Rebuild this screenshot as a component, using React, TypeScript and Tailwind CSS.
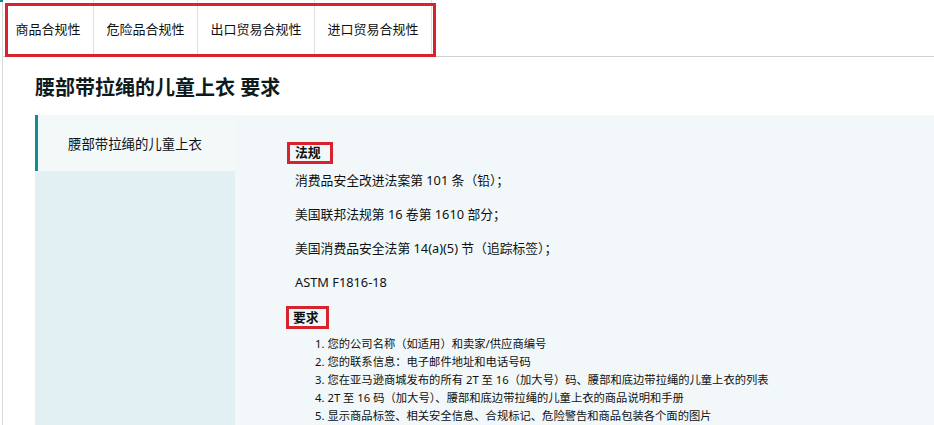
import React from "react";

const tabs = ["商品合规性", "危险品合规性", "出口贸易合规性", "进口贸易合规性"];

const regs = [
  "消费品安全改进法案第 101 条（铅）；",
  "美国联邦法规第 16 卷第 1610 部分；",
  "美国消费品安全法第 14(a)(5) 节（追踪标签）；",
  "ASTM F1816-18",
];

const reqs = [
  "您的公司名称（如适用）和卖家/供应商编号",
  "您的联系信息：电子邮件地址和电话号码",
  "您在亚马逊商城发布的所有 2T 至 16（加大号）码、腰部和底边带拉绳的儿童上衣的列表",
  "2T 至 16 码（加大号）、腰部和底边带拉绳的儿童上衣的商品说明和手册",
  "显示商品标签、相关安全信息、合规标记、危险警告和商品包装各个面的图片",
];

export default function App() {
  return (
    <div
      className="relative w-[934px] h-[425px] overflow-hidden bg-white text-[#0f1111]"
      style={{ fontFamily: '"Noto Sans", "Noto Sans CJK SC", sans-serif' }}
    >
      <div className="absolute left-0 top-0 w-[3px] h-[2px] bg-[#10898f]" />
      <div className="ml-[2px] h-full border-l border-[#d9dcdc] flex flex-col">
        {/* tabs */}
        <div className="flex h-[57px] shrink-0 border-b border-[#d0d3d3]">
          {tabs.map((t) => (
            <div
              key={t}
              className="flex items-center px-[12.5px] border-r border-[#dcdfdf] text-[13px] leading-[18px] pt-[1px]"
            >
              {t}
            </div>
          ))}
        </div>

        {/* title */}
        <div className="h-[58px] shrink-0 pl-[32px] pt-[17px]">
          <h1 className="text-[20px] leading-[28px] font-bold text-[#0f1a1c]">
            腰部带拉绳的儿童上衣 要求
          </h1>
        </div>

        {/* panel */}
        <div className="ml-[32px] flex-1 flex bg-[#f2f8f9]">
          <div className="w-[200px] shrink-0 flex flex-col">
            <div className="h-[56px] shrink-0 border-l-[3px] border-[#0d8e96] bg-[#f3f8f9] pl-[30px] flex items-center text-[13.4px] leading-[18px] pt-[1px]">
              腰部带拉绳的儿童上衣
            </div>
            <div className="flex-1 bg-[#e2f0f3]" />
          </div>

          <div className="flex-1 pl-[60px] pt-[27px] flex flex-col items-start">
            <div className="flex items-center h-[22px] -ml-[8px] border-[3px] border-[#d7232e] pl-[5px] pr-[9px] text-[12.8px] font-bold mb-[7px]">
              法规
            </div>
            {regs.map((r) => (
              <p key={r} className="h-[20px] flex items-center text-[12.8px] mb-[14px] whitespace-nowrap">
                {r}
              </p>
            ))}
            <div className="flex items-center h-[23px] -ml-[9px] -mt-[1px] border-[3px] border-[#d7232e] pl-[4px] pr-[7px] text-[12.8px] font-bold mb-[6px]">
              要求
            </div>
            <ol className="pl-[20px] text-[11.3px]">
              {reqs.map((r, i) => (
                <li key={i} className="h-[18px] flex items-center whitespace-nowrap">
                  {i + 1}. {r}
                </li>
              ))}
            </ol>
          </div>
        </div>
      </div>

      {/* annotation box around tabs */}
      <div className="absolute left-[5px] top-[3px] w-[431px] h-[54px] border-[3px] border-[#d7232e]" />
    </div>
  );
}
